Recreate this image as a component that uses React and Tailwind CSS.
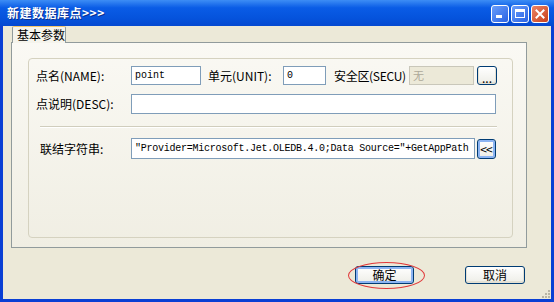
import React from 'react';

const cjk = { fontFamily: '"Noto Sans CJK SC", "Liberation Sans", sans-serif' };
const mono = { fontFamily: '"Liberation Mono", "Noto Sans CJK SC", monospace' };

function Field({ className = '', children, disabled }) {
    return (
        <div
            className={`h-full flex items-center px-[3px] border border-[#7F9DB9] text-[10px] overflow-hidden whitespace-nowrap ${disabled ? 'bg-[#ECE9D8] border-[#C9C7BA] text-[#ACA899]' : 'bg-white text-black'} ${className}`}
            style={mono}
        >
            {children}
        </div>
    );
}

function XpButton({ children, className = '', focused }) {
    return (
        <div
            className={`flex items-center justify-center rounded-[3px] border border-[#003C74] bg-[linear-gradient(#FFFFFF,#F0F0EA_85%,#D6D0C5)] text-[12px] text-black ${focused ? 'shadow-[inset_0_0_0_2px_#8CB4F2]' : 'shadow-[inset_0_-1px_0_1px_#E3E0D4]'} ${className}`}
            style={cjk}
        >
            {children}
        </div>
    );
}

export default function App() {
    return (
        <div className="w-[554px] h-[302px] flex flex-col bg-[#0A3FD4] overflow-hidden" style={cjk}>
            {/* Title bar */}
            <div className="h-[26px] flex items-center pl-[7px] pr-[5px] bg-[linear-gradient(#3D8DF5,#0A5CE6_30%,#0553DC_70%,#0549D0)]">
                <span className="text-white font-bold text-[12px] tracking-[0.5px] [text-shadow:1px_1px_0_#0A2F8F]">新建数据库点&gt;&gt;&gt;</span>
                <div className="ml-auto flex gap-[2px] mt-[1px]">
                    <div className="w-[18px] h-[18px] rounded-[3px] border border-white bg-[linear-gradient(135deg,#6A9EFA,#2A63E4)] flex items-end pl-[4px] pb-[4px]">
                        <div className="w-[6px] h-[3px] bg-white" />
                    </div>
                    <div className="w-[18px] h-[18px] rounded-[3px] border border-white bg-[linear-gradient(135deg,#6A9EFA,#2A63E4)] flex items-center justify-center">
                        <div className="w-[10px] h-[9px] border border-white border-t-[3px]" />
                    </div>
                    <div className="w-[18px] h-[18px] rounded-[3px] border border-white bg-[linear-gradient(135deg,#EC8466,#C8401A)] flex items-center justify-center">
                        <svg width="10" height="10" viewBox="0 0 10 10">
                            <path d="M1.5 1.5 L8.5 8.5 M8.5 1.5 L1.5 8.5" stroke="white" strokeWidth="2" strokeLinecap="square" />
                        </svg>
                    </div>
                </div>
            </div>

            {/* Body */}
            <div className="relative flex-1 mx-[3px] mb-[3px] bg-[#ECE9D8] flex flex-col">
                {/* Tab header */}
                <div className="pl-[9px] h-[16px] flex">
                    <div className="relative z-10 w-[54px] h-[17px] border border-b-0 border-[#919B9C] border-t-[#F5C76B] rounded-t-[2px] bg-[#F5F4EC] flex items-center pl-[4px] text-[12px] text-black">
                        基本参数
                    </div>
                </div>

                {/* Tab panel */}
                <div className="ml-[8px] w-[516px] h-[206px] border border-[#919B9C] bg-[linear-gradient(#FAF9F4,#F0EEE3)] pt-[15px] pl-[16px]">
                    {/* Group box */}
                    <div className="w-[485px] h-[180px] rounded-[4px] border border-[#D5D2C0] pt-[7px] pl-[7px] text-[12px] text-black">
                        {/* Row 1 */}
                        <div className="flex items-center h-[19px]">
                            <div className="w-[95px]">点名(NAME):</div>
                            <Field className="w-[70px]">point</Field>
                            <div className="w-[75px] ml-[7px]">单元(UNIT):</div>
                            <Field className="w-[43px]">0</Field>
                            <div className="w-[75px] ml-[8px] tracking-[-0.3px]">安全区(SECU)</div>
                            <Field className="w-[65px]" disabled>
                                <span style={cjk} className="text-[11px]">无</span>
                            </Field>
                            <XpButton className="ml-[3px] w-[20px] h-[19px] rounded-[2px] border-[#1C5180] text-[10px] leading-none pt-[4px]">
                                ...
                            </XpButton>
                        </div>

                        {/* Row 2 */}
                        <div className="flex items-center h-[20px] mt-[9px]">
                            <div className="w-[95px]">点说明(DESC):</div>
                            <Field className="w-[365px]" />
                        </div>

                        {/* Separator */}
                        <div className="ml-[4px] w-[457px] mt-[12px] border-t border-[#D0CDBD] border-b border-b-white" />

                        {/* Row 3 */}
                        <div className="flex items-center h-[21px] mt-[10px]">
                            <div className="w-[95px] pl-[4px]">联结字符串:</div>
                            <Field className="w-[344px] tracking-[-0.25px]">"Provider=Microsoft.Jet.OLEDB.4.0;Data Source="+GetAppPath</Field>
                            <XpButton focused className="ml-[2px] w-[19px] h-[20px] rounded-[2px] text-[9px] tracking-[-1px] text-[#1C3F9A] pr-[1px]">
                                &lt;&lt;
                            </XpButton>
                        </div>
                    </div>
                </div>

                {/* Bottom buttons */}
                <div className="flex pl-[352px] mt-[18px]">
                    <XpButton focused className="w-[59px] h-[18px]">确定</XpButton>
                    <XpButton className="w-[60px] h-[18px] ml-[51px]">取消</XpButton>
                </div>

                {/* annotation ellipse */}
                <div className="absolute left-[345px] top-[236px] w-[77px] h-[27px] rounded-[50%] border border-[#E0393A]" />

                {/* size grip */}
                <div className="absolute right-[1px] bottom-[1px] grid grid-cols-3 gap-[1px]">
                    <div className="w-[2px] h-[2px]" />
                    <div className="w-[2px] h-[2px]" />
                    <div className="w-[2px] h-[2px] bg-[#B9B6A6]" />
                    <div className="w-[2px] h-[2px]" />
                    <div className="w-[2px] h-[2px] bg-[#B9B6A6]" />
                    <div className="w-[2px] h-[2px] bg-[#B9B6A6]" />
                    <div className="w-[2px] h-[2px] bg-[#B9B6A6]" />
                    <div className="w-[2px] h-[2px] bg-[#B9B6A6]" />
                    <div className="w-[2px] h-[2px] bg-[#B9B6A6]" />
                </div>
            </div>
        </div>
    );
}
